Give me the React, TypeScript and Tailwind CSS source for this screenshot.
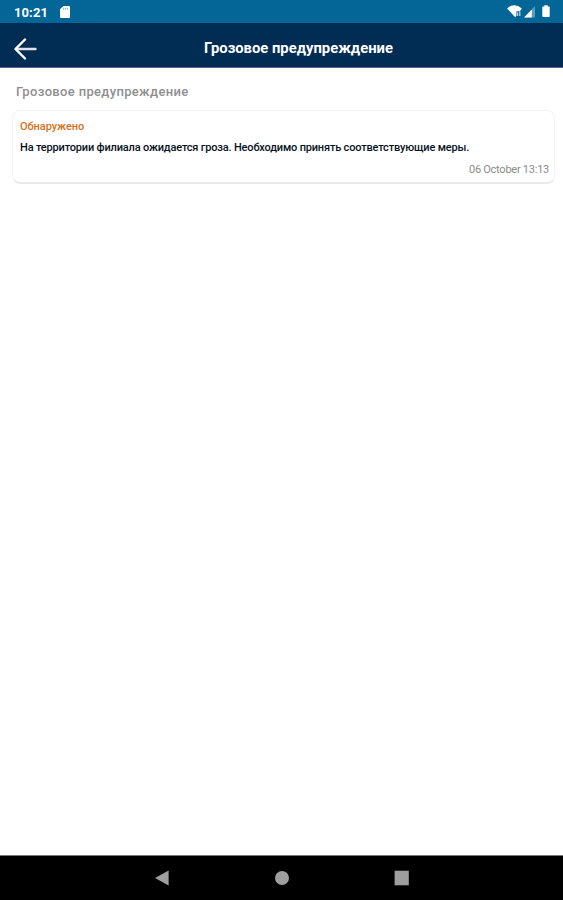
import type { ReactNode } from 'react';

const alerts = [
  {
    id: 'storm-1',
    status: 'Обнаружено',
    message: 'На территории филиала ожидается гроза. Необходимо принять соответствующие меры.',
    date: '06 October 13:13',
  },
];

const StatusBar = () => (
  <div className="flex h-[23px] shrink-0 items-center bg-[#036697] pl-3.5 pr-[13px] text-white">
    <span className="pt-0.5 text-[13px] leading-none font-bold tracking-[0.1px]">10:21</span>
    {/* SD card */}
    <svg className="ml-3 h-[12px] w-[10px]" viewBox="0 0 10 12">
      <path d="M3.3 0H9Q10 0 10 1V11Q10 12 9 12H1Q0 12 0 11V3.3Z" fill="currentColor" />
      <path d="M3.7 1.8v2M5.6 1.8v2M7.5 1.8v2" stroke="#7faec8" strokeWidth="0.9" />
    </svg>
    <div className="ml-auto flex items-center">
      {/* Wi-Fi */}
      <svg className="h-[13px] w-[15px]" viewBox="0 0 15 13">
        <path d="M0 3.4Q3.2 0.3 7.3 0.3T14.8 3.4L13 6.2H9.4V10.6L8.2 12.2Z" fill="currentColor" />
        <path d="M10.6 7.2V11M12.8 6.4V11" stroke="currentColor" strokeWidth="1.4" opacity="0.65" />
      </svg>
      {/* Mobile signal */}
      <svg className="ml-[2px] h-[12px] w-[11px]" viewBox="0 0 11 12">
        <path d="M11 0V11.5H0Z" fill="currentColor" opacity="0.35" />
        <path d="M7.8 3.5V11.5H0Z" fill="currentColor" />
      </svg>
      {/* Battery */}
      <svg className="ml-[7px] h-[13px] w-[8px]" viewBox="0 0 8 13">
        <path d="M2.3 0.2h3.4v1.2H7q.7 0 .7.7v9.2q0 .7-.7.7H1q-.7 0-.7-.7V2.1q0-.7.7-.7h1.3Z" fill="currentColor" />
      </svg>
    </div>
  </div>
);

const Header = ({ title }: { title: string }) => (
  <header className="grid h-[45px] shrink-0 grid-cols-[48px_1fr_14px] items-center border-b border-[#605d88] bg-[#012c54] text-white">
    <button type="button" aria-label="Назад" className="pt-[8px] pl-3.5">
      <svg className="h-[22px] w-[23px]" viewBox="0 0 23 22" fill="none" strokeWidth="2.4" strokeLinecap="round" strokeLinejoin="round">
        <path d="M2 11H21.5" stroke="#e4dfe9" />
        <path d="M11 1.5L1.5 11L11 20.5" stroke="currentColor" />
      </svg>
    </button>
    <h1 className="pt-[6px] text-center text-[14.8px] leading-5 font-bold">{title}</h1>
  </header>
);

const AlertCard = ({ status, message, date }: { status: string; message: string; date: string }) => (
  <article className="rounded-[8px] border border-b-2 border-[#f3f3f3] border-b-[#e9e9e9] bg-white px-[7px] pt-2 pb-1">
    <p className="text-[11px] leading-4 font-medium tracking-[-0.05px] text-[#d6701c]">{status}</p>
    <p className="mt-[5px] text-[11px] leading-4 font-medium tracking-[-0.175px] whitespace-nowrap text-[#07121e]">{message}</p>
    <p className="mt-[6px] -mr-[2px] text-right text-[11px] leading-4 tracking-[-0.25px] text-[#8b8b8b]">{date}</p>
  </article>
);

const NavButton = ({ label, children }: { label: string; children: ReactNode }) => (
  <button type="button" aria-label={label} className="flex w-[120px] items-center justify-center">
    <svg className="h-4 w-4" viewBox="0 0 16 16" fill="#9e9e9e">
      {children}
    </svg>
  </button>
);

const App = () => (
  <div className="flex h-screen flex-col overflow-hidden bg-white font-[Roboto,'Noto_Sans',sans-serif]">
    <StatusBar />
    <Header title="Грозовое предупреждение" />

    <main className="flex-1 pt-[15px] pr-2 pl-3">
      <h2 className="mb-2.5 pl-1 text-[13px] leading-[17px] font-medium tracking-[0.33px] text-[#8f8f8f]">
        Грозовое предупреждение
      </h2>
      {alerts.map((alert) => (
        <AlertCard key={alert.id} status={alert.status} message={alert.message} date={alert.date} />
      ))}
    </main>

    <nav className="flex h-[45px] shrink-0 justify-center border-t border-[#777777] bg-black">
      <NavButton label="Назад">
        <path d="M14.6 0.5V15.5L1 8Z" />
      </NavButton>
      <NavButton label="Домой">
        <circle cx="8" cy="8" r="7" />
      </NavButton>
      <NavButton label="Недавние">
        <rect x="0.6" y="0.7" width="14.2" height="14.6" />
      </NavButton>
    </nav>
  </div>
);

export default App;
